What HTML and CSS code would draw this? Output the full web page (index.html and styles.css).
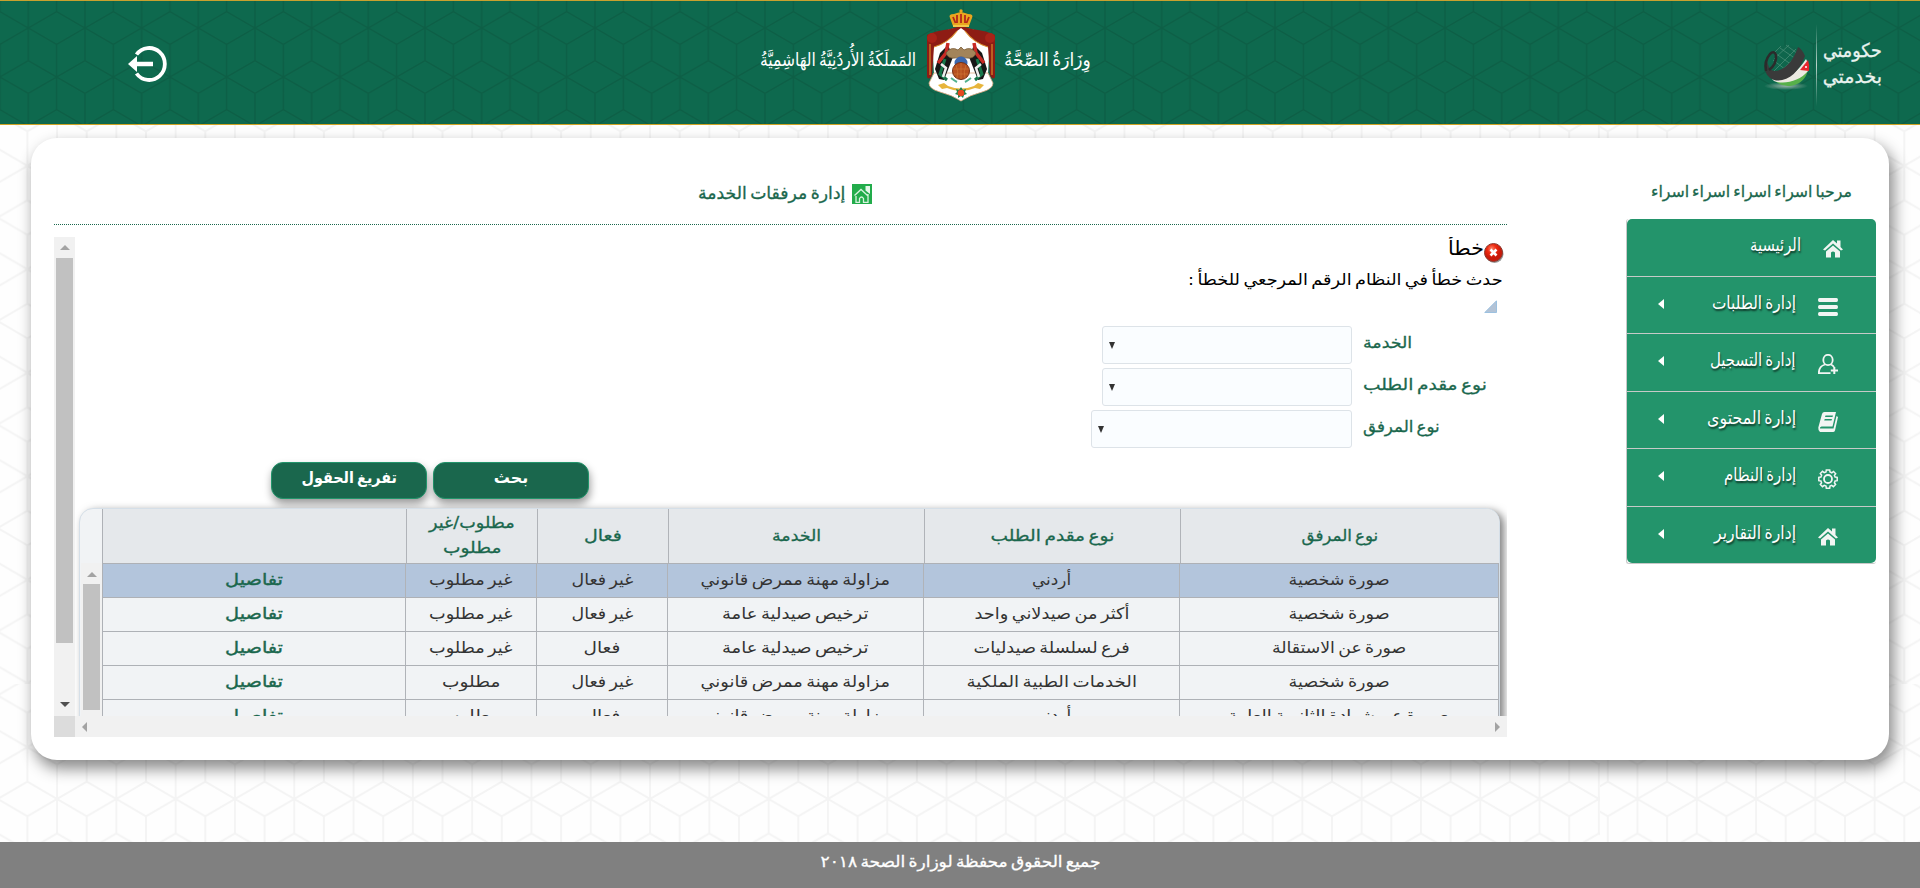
FILE: index.html
```html
<!DOCTYPE html>
<html lang="ar" dir="rtl">
<head>
<meta charset="utf-8">
<title>إدارة مرفقات الخدمة</title>
<link rel="stylesheet" href="styles.css">
</head>
<body>
<svg class="page-pattern" width="1920" height="888" aria-hidden="true">
  <defs>
    <path id="hexPath" fill="none" stroke="#f4f4f4" stroke-width="2" d="M0 0L29.65 17.25L59.3 0M0 103.5L29.65 86.25L59.3 103.5M0 69L59.3 34.5M0 34.5L59.3 69M0 0V34.5M59.3 0V34.5M0 69V103.5M59.3 69V103.5M29.65 17.25V86.25"/>
    <pattern id="hexA" width="59.3" height="103.5" patternUnits="userSpaceOnUse" patternTransform="translate(27.4 165.8)"><use href="#hexPath"/></pattern>
    <pattern id="hexB" width="59.3" height="103.5" patternUnits="userSpaceOnUse" patternTransform="translate(27.4 747.2)"><use href="#hexPath"/></pattern>
    <pattern id="hexC" width="59.3" height="103.5" patternUnits="userSpaceOnUse" patternTransform="translate(1904.3 165.8)"><use href="#hexPath"/></pattern>
    <pattern id="hexD" width="59.3" height="103.5" patternUnits="userSpaceOnUse" patternTransform="translate(1904.3 747.2)"><use href="#hexPath"/></pattern>
  </defs>
  <rect width="1600" height="684" fill="url(#hexA)"/>
  <rect y="684" width="1600" height="204" fill="url(#hexB)"/>
  <rect x="1600" width="320" height="684" fill="url(#hexC)"/>
  <rect x="1600" y="684" width="320" height="204" fill="url(#hexD)"/>
</svg>

<header class="header">
  <svg class="header-pattern" width="1920" height="123" aria-hidden="true">
    <defs>
      <pattern id="hexH" width="56.67" height="98" patternUnits="userSpaceOnUse" patternTransform="translate(28.3 27)">
        <path fill="none" stroke="#0d5f46" stroke-width="1.5" d="M0 0L28.33 16.33L56.67 0M0 98L28.33 81.67L56.67 98M0 65.33L56.67 32.67M0 32.67L56.67 65.33M0 0V32.67M56.67 0V32.67M0 65.33V98M56.67 65.33V98M28.33 16.33V81.67"/>
      </pattern>
    </defs>
    <rect width="1920" height="123" fill="url(#hexH)"/>
  </svg>
  <div class="egov">
    <div class="egov-text">
      <span class="fit" data-w="59">حكومتي</span>
      <span class="fit" data-w="59">بخدمتي</span>
    </div>
    <i class="egov-rule"></i>
    <svg class="egov-ball" width="48" height="50" viewBox="0 0 48 50">
      <defs><radialGradient id="sh"><stop offset="0" stop-color="#b9c4bd" stop-opacity=".8"/><stop offset="1" stop-color="#b9c4bd" stop-opacity="0"/></radialGradient></defs>
      <ellipse cx="24" cy="43" rx="22" ry="4" fill="url(#sh)"/>
      <path d="M10 9Q22 -2 35 5L30 18L12 29L8 26Z" fill="#0f664c"/>
      <path d="M13 10L30 22M18 5L34 16M24 2L36 11M11 17L24 27M34 6L12 28M27 2L12 16M35 13L20 27M19 3L12 10" stroke="#4f917a" stroke-width=".7"/>
      <path d="M12 37Q30 40 46 24C46 36 36 43 26 43Q18 43 12 37Z" fill="#57b04a"/>
      <path d="M10 36Q30 38 44 16Q47 20 46 28C38 38 22 42 12 38Z" fill="#eceae2"/>
      <path d="M46 17L38 27L47 28Q48 22 46 17Z" fill="#e5262d"/><circle cx="44" cy="24" r="1" fill="#fff"/>
      <path d="M36 4Q40 6 43 13C37 30 24 40 12 37Q3 34 3 24Q3 20 5 17Q6 27 12 28C24 28 32 16 36 4Z" fill="#3a3a3a"/>
      <path d="M7 27Q15 21 14 12Q12 7 8 11Q2 18 4 28" fill="none" stroke="#2b2b2b" stroke-width="2.6"/>
    </svg>
  </div>
  <div class="brand">
    <span class="brand-name fit" data-w="87">وِزَارَةُ الصِّحَّةُ</span>
    <svg class="emblem" width="70" height="94" viewBox="0 0 70 94">
      <path d="M6 28Q35 10 64 28L62 66Q66 74 54 82Q42 86 35 92Q28 86 16 82Q4 74 8 66Z" fill="#fff"/>
      <path d="M3 74Q3 80 14 83Q26 86 35 92Q44 86 56 83Q67 80 67 74L62 64H8Z" fill="#fff" stroke="#e0a880" stroke-width=".8"/>
      <path d="M24 20Q8 22 1 26V68Q3 72 6 66L8 38Q22 34 31 22L35 19L39 22Q48 34 62 38L64 66Q67 72 69 68V26Q62 22 46 20L35 17Z" fill="#8e1c14"/>
      <circle cx="6" cy="29" r="5" fill="#a82318"/><circle cx="64" cy="29" r="5" fill="#a82318"/>
      <path d="M8 38Q22 34 31 22M62 38Q48 34 39 22M4 35V66M66 35V66" fill="none" stroke="#d98c2b" stroke-width="1.2"/>
      <path d="M24 9Q22 5 28 5L31 4L35 3L39 4L42 5Q48 5 46 9L43 17H27Z" fill="#e9a51f"/>
      <path d="M27 8L29.500 14M31 6V14M35 5V14M39 6V14M43 8L40.500 14" stroke="#b3261a" stroke-width="1.800"/>
      <path d="M27 17H43" stroke="#f3c64a" stroke-width="2"/><circle cx="35" cy="2" r="1.700" fill="#e9a51f"/>
      <path d="M22 36L14 44L9 60L13 70L18 71L27 48Z" fill="#171717"/><path d="M48 36L56 44L61 60L57 70L52 71L43 48Z" fill="#171717"/>
      <path d="M22 34L20 44L12 54M48 34L50 44L58 54" stroke="#c82a25" stroke-width="3.500" fill="none"/>
      <path d="M19 50L14 65L21 71M51 50L56 65L49 71" stroke="#16774b" stroke-width="3" fill="none"/>
      <path d="M15 55L20 59L17 68M55 55L50 59L53 68" stroke="#eee" stroke-width="2.500" fill="none"/>
      <path d="M20 44Q25 37 32 41L35 38L38 41Q45 37 50 44Q48 50 41 49Q35 47 29 49Q22 50 20 44Z" fill="#a3845a" stroke="#7a5c36" stroke-width=".8"/>
      <circle cx="35" cy="54" r="6.500" fill="#3c67ad"/>
      <circle cx="35" cy="62" r="8.500" fill="#b6501f" stroke="#743015"/>
      <path d="M27 60H43M28 65H42M35 54V70M30 56Q33 63 31 69M40 56Q37 63 39 69" stroke="#cf7434" stroke-width=".7" fill="none"/>
      <path d="M25 69Q29 72 31 73M45 69Q41 72 39 73" stroke="#50b08e" stroke-width="2"/>
      <path d="M12 76L18 74L22 77Q35 82 48 77L52 74L58 76L54 80L49 79Q35 85 21 79L16 80Z" fill="#e7b53c"/>
      <path d="M35 78L37 81L40 80L39 83L41 85L38 86L37 89L35 87L32 89L32 86L29 85L31 83L30 80L33 81Z" fill="#17824f"/><circle cx="35" cy="84" r="3.300" fill="#e5471f"/>
    </svg>
    <span class="brand-name far fit" data-w="156">المَملَكَةُ الأُردُنِيَّةُ الهَاشِمِيَّةُ</span>
  </div>
  <a class="logout" href="#">
    <svg width="40" height="40" viewBox="0 0 40 40" fill="none" stroke="#fff"><path d="M8.5 10.5A15.7 16 0 1 1 8.5 29.500" stroke-width="3.800"/><path d="M8 20H25" stroke-width="4.500"/><path d="M0 20L9 12V28Z" fill="#fff" stroke="none"/></svg>
  </a>
</header>

<main class="card">
  <aside class="sidebar">
    <div class="greeting"><span class="fit" data-w="201">مرحبا اسراء اسراء اسراء اسراء</span></div>
    <nav class="menu">
      <a class="item home"><svg class="ico" viewBox="0 0 20 20"><path d="M10 1L0 10.500L2 11.500L10 4.500L18 11.500L20 10.500L17.500 8V1.500H14V4.500ZM3 12.500L10 6.500L17 12.500V18.500H12V13.500Q10 11.500 8 13.500V18.500H3Z"/></svg><span class="fit" data-w="51">الرئيسية</span></a>
      <a class="item"><svg class="ico" viewBox="0 0 20 20"><path d="M1.500 1H18.500Q20 1 20 3T18.500 5H1.500Q0 5 0 3T1.500 1ZM1.500 8H18.500Q20 8 20 10T18.500 12H1.500Q0 12 0 10T1.500 8ZM1.500 15H18.500Q20 15 20 17T18.500 19H1.500Q0 19 0 17T1.500 15Z"/></svg><span class="fit" data-w="84">إدارة الطلبات</span><i></i></a>
      <a class="item"><svg class="ico line" viewBox="0 0 20 20"><ellipse cx="10" cy="6" rx="4.700" ry="5.200"/><path d="M7 10.500C2 12 .8 15 .8 19.200H12.500M13 10.500Q15 11.500 16 13"/><path d="M16.300 13V20M12.800 16.500H20" stroke-width="2"/></svg><span class="fit" data-w="86">إدارة التسجيل</span><i></i></a>
      <a class="item"><svg class="ico" viewBox="0 0 20 20"><path fill-rule="evenodd" d="M6.500 0H18L14.500 14.500H3.500Q1.500 15 2 16.500H15.500L18.500 4L20 5L17 18.500Q16.500 20 15 20H2Q0 19 .3 15.500L4 2Q4.500 0 6.500 0ZM7.500 3.500L7 5H14.500L15 3.500ZM6.700 7L6.200 8.500H13.500L14 7Z"/></svg><span class="fit" data-w="89">إدارة المحتوى</span><i></i></a>
      <a class="item"><svg class="ico line" viewBox="0 0 20 20"><path stroke-width="1.500" d="M8 3L8.300 1H11.700L12 3L13.800 3.800L15.500 2.500L17.700 4.800L16.400 6.300L17.100 8L19.200 8.300V11.700L17.100 12L16.400 13.800L17.600 15.500L15.400 17.700L13.700 16.400L12 17.100L11.700 19.200H8.300L8 17.100L6.200 16.400L4.500 17.700L2.300 15.500L3.600 13.800L2.900 12L.8 11.700V8.300L2.900 8L3.600 6.200L2.300 4.500L4.500 2.300L6.200 3.700Z"/><circle cx="10" cy="10" r="4"/></svg><span class="fit" data-w="72">إدارة النظام</span><i></i></a>
      <a class="item"><svg class="ico" viewBox="0 0 20 20"><path d="M10 1L0 10.500L2 11.500L10 4.500L18 11.500L20 10.500L17.500 8V1.500H14V4.500ZM3 12.500L10 6.500L17 12.500V18.500H12V13.500Q10 11.500 8 13.500V18.500H3Z"/></svg><span class="fit" data-w="82">إدارة التقارير</span><i></i></a>
    </nav>
  </aside>

  <section class="content">
    <h1 class="title">
      <svg width="20" height="20" viewBox="0 0 20 20"><path d="M0 0H20V20H0Z" fill="#22ac4b"/><path d="M2.500 11.500L9 5.500L15.500 11.500M4 12V18.300H7.500V14.500Q9.500 11.500 11.500 14.500V18.300H16V10" fill="none" stroke="#d8f3df" stroke-width="1.300"/><path d="M13.500 2H18V10L13.500 6.500Z" fill="#e4f7e9"/></svg>
      <span class="fit" data-w="147">إدارة مرفقات الخدمة</span>
    </h1>
    <div class="scroller">
      <div class="viewport">
        <div class="error-head"><svg width="20" height="20" viewBox="0 0 20 20"><defs><radialGradient id="er" cx=".4" cy=".3"><stop offset="0" stop-color="#ff8a70"/><stop offset=".5" stop-color="#ee2a10"/><stop offset="1" stop-color="#c81a0a"/></radialGradient></defs><circle cx="10.500" cy="11" r="9" fill="#999"/><circle cx="9.500" cy="9.500" r="9" fill="url(#er)" stroke="#8d3a30"/><path d="M6.500 6.500L12.500 12.500M12.500 6.500L6.500 12.500" stroke="#fff" stroke-width="2.600"/></svg><span class="fit" data-w="36">خطأ</span></div>
        <div class="error-text"><span class="fit" data-w="315">حدث خطأ في النظام الرقم المرجعي للخطأ :</span></div>
        <svg class="corner" width="13" height="13" viewBox="0 0 13 13"><path d="M12.500 .8V12.500H.8Z" fill="#b3c3d6" stroke="#9cc1e0"/></svg>
        <form class="filters">
          <div class="field"><label><span class="fit" data-w="49">الخدمة</span></label><div class="select"><i></i></div></div>
          <div class="field"><label><span class="fit" data-w="124">نوع مقدم الطلب</span></label><div class="select"><i></i></div></div>
          <div class="field"><label><span class="fit" data-w="77">نوع المرفق</span></label><div class="select wide"><i></i></div></div>
        </form>
        <div class="actions">
          <button type="button"><span class="fit" data-w="34">بحث</span></button>
          <button type="button"><span class="fit" data-w="95">تفريغ الحقول</span></button>
        </div>
        <div class="panel">
          <div class="tables">
            <div class="row head">
              <div><span class="fit" data-w="77">نوع المرفق</span></div><div><span class="fit" data-w="124">نوع مقدم الطلب</span></div><div><span class="fit" data-w="49">الخدمة</span></div><div><span class="fit" data-w="38">فعال</span></div><div><span class="fit" data-w="86">مطلوب/غير</span><span class="fit" data-w="58">مطلوب</span></div><div></div>
            </div>
            <div class="row selected"><div><span class="fit" data-w="101">صورة شخصية</span></div><div><span class="fit" data-w="39">أردني</span></div><div><span class="fit" data-w="190">مزاولة مهنة ممرض قانوني</span></div><div><span class="fit" data-w="62">غير فعال</span></div><div><span class="fit" data-w="83">غير مطلوب</span></div><div><a class="fit" data-w="58">تفاصيل</a></div></div>
            <div class="row"><div><span class="fit" data-w="101">صورة شخصية</span></div><div><span class="fit" data-w="155">أكثر من صيدلاني واحد</span></div><div><span class="fit" data-w="146">ترخيص صيدلية عامة</span></div><div><span class="fit" data-w="62">غير فعال</span></div><div><span class="fit" data-w="83">غير مطلوب</span></div><div><a class="fit" data-w="58">تفاصيل</a></div></div>
            <div class="row"><div><span class="fit" data-w="134">صورة عن الاستقالة</span></div><div><span class="fit" data-w="156">فرع لسلسلة صيدليات</span></div><div><span class="fit" data-w="146">ترخيص صيدلية عامة</span></div><div><span class="fit" data-w="37">فعال</span></div><div><span class="fit" data-w="83">غير مطلوب</span></div><div><a class="fit" data-w="58">تفاصيل</a></div></div>
            <div class="row"><div><span class="fit" data-w="101">صورة شخصية</span></div><div><span class="fit" data-w="171">الخدمات الطبية الملكية</span></div><div><span class="fit" data-w="190">مزاولة مهنة ممرض قانوني</span></div><div><span class="fit" data-w="62">غير فعال</span></div><div><span class="fit" data-w="58">مطلوب</span></div><div><a class="fit" data-w="58">تفاصيل</a></div></div>
            <div class="row"><div><span class="fit" data-w="221">صورة عن شهادة الثانوية العامة</span></div><div><span class="fit" data-w="39">أردني</span></div><div><span class="fit" data-w="190">مزاولة مهنة ممرض قانوني</span></div><div><span class="fit" data-w="37">فعال</span></div><div><span class="fit" data-w="58">مطلوب</span></div><div><a class="fit" data-w="58">تفاصيل</a></div></div>
          </div>
          <div class="gutter"><div class="inner-bar"><i class="up"></i><b></b></div></div>
        </div>
      </div>
      <div class="vbar"><i class="up"></i><b></b><i class="down"></i></div>
      <div class="hbar"><i class="right"></i><i class="left"></i></div>
      <div class="bar-corner"></div>
    </div>
  </section>
</main>

<footer class="footer"><span class="fit" data-w="280">جميع الحقوق محفظة لوزارة الصحة ٢٠١٨</span></footer>
<script src="fit.js"></script>
</body>
</html>
```
FILE: styles.css
```css
* { box-sizing: border-box; }
body {
  margin: 0; height: 888px; overflow: hidden; position: relative;
  display: flex; flex-direction: column; background: #fefefe;
  font-family: "DejaVu Sans", sans-serif; font-size: 16px; line-height: 20px; color: #333;
  word-spacing: -2px;
}
.page-pattern { position: absolute; top: 0; left: 0; }
.fit { display: inline-block; white-space: nowrap; flex: none; }

.header {
  position: relative; height: 125px; flex: none; background: #0e694e;
  border-top: 1px solid #c9a12e; border-bottom: 1px solid #d0a324;
  display: flex; justify-content: space-between; padding: 0 37px 0 128px;
}
.header-pattern { position: absolute; top: 0; left: 0; }
.egov, .brand, .logout { position: relative; display: flex; direction: rtl; }
.egov { width: 330px; }
.egov-text { width: 60px; padding: 36px 1px 0 0; display: flex; flex-direction: column; align-items: flex-start; color: #e9f3ef; font-size: 19px; line-height: 26px; -webkit-text-stroke: .3px #e9f3ef; }
.egov-text .fit { transform-origin: right; }
.egov-rule { width: 1px; height: 82px; margin: 23px 6px 0 6px; background: linear-gradient(transparent, #b9d2c9, transparent); }
.egov-ball { margin-top: 42px; }
.brand { position: absolute; left: 760px; top: 0; width: 331px; justify-content: space-between; }
.brand-name { color: #fff; font-size: 18px; line-height: 24px; margin-top: 47px; transform-origin: right; height: 24px; }
.brand-name.far { transform-origin: left; }
.emblem { margin-top: 8px; position: absolute; left: 166px; }
.logout { padding-top: 43px; }

.card {
  position: relative; flex: none; width: 1858px; height: 622px; margin: 13px 31px 0;
  background: #fff; border-radius: 26px; box-shadow: 4px 8px 15px 1px rgba(0,0,0,.45);
  display: flex; gap: 119px; padding: 0 13px 0 23px;
}
.sidebar { width: 250px; padding-top: 44px; }
.greeting { height: 37px; padding-right: 24px; color: #1a674d; -webkit-text-stroke: .3px #1a674d; }
.greeting .fit, .item .fit, .error-head .fit, .error-text .fit { transform-origin: right; }
.menu { border: 1px solid #c8c8c8; border-width: 0 0 1px 1px; height: 345px; display: flex; flex-direction: column; border-radius: 3px; }
.item {
  position: relative; flex: 1; display: flex; align-items: flex-start; background: #23946b;
  border-bottom: 1px solid #c6cac8; padding: 16px 38px 0 38px; color: #fff; font-size: 18px;
  text-shadow: 1px 2px 2px rgba(0,0,0,.6);
}
.item:first-child { border-radius: 5px 5px 0 0; }
.item:last-child { border-bottom: 0; border-radius: 0 0 5px 5px; }
.item.home { padding-right: 33px; }
.ico { width: 20px; height: 20px; margin: 4px 0 0 22px; fill: #f2f5f3; flex: none; }
.ico.line { fill: none; stroke: #f2f5f3; stroke-width: 1.8; }
.item i { position: absolute; left: 31px; top: 22px; border: solid transparent; border-width: 5px 6px 5px 0; border-right-color: #fff; }

.content { width: 1453px; padding-top: 45px; }
.title {
  margin: 0; height: 42px; border-bottom: 1px dotted #1a674d; display: flex; gap: 7px;
  padding-right: 635px; font-weight: 400; font-size: 17px; color: #1a674d; -webkit-text-stroke: .3px #1a674d;
}
.title svg { margin-top: 1px; }
.title .fit { transform-origin: right; }
.scroller { margin-top: 12px; display: grid; grid-template-columns: 1432px 21px; grid-template-rows: 479px 21px; direction: rtl; }
.viewport { overflow: hidden; width: 1432px; height: 479px; }
.vbar { background: #f1f1f1; display: flex; flex-direction: column; align-items: center; padding: 7px 2px 9px; }
.vbar b { width: 17px; height: 385px; background: #c1c1c1; margin-top: 8px; margin-bottom: auto; }
.up, .down, .left, .right { width: 0; height: 0; border: 5px solid transparent; }
.up { border-top: 0; border-bottom-color: #a3a3a3; }
.vbar .up { margin-top: 1px; }
.down { border-bottom: 0; border-top-color: #505050; }
.left { border-left: 0; border-right-color: #a3a3a3; }
.right { border-right: 0; border-left-color: #a3a3a3; }
.hbar { background: #f1f1f1; display: flex; justify-content: space-between; align-items: center; padding: 0 7px; }
.bar-corner { background: #dcdcdc; }

.error-head { display: flex; height: 31px; padding: 5px 3px 0 0; color: #000; font-size: 20px; }
.error-head svg { margin-top: 1px; }
.error-head .fit { margin-top: -4px; }
.error-text { height: 32px; padding: 2px 4px 0 0; color: #000; }
.corner { display: block; margin: 0 10px 0 0; }
.filters { padding: 13px 16px 0 0; display: flex; flex-direction: column; gap: 4px; }
.field { display: flex; height: 38px; }
.field label { width: 139px; text-align: left; direction: ltr; padding: 7px 0 0 11px; color: #1a674d; -webkit-text-stroke: .3px #1a674d; }
.field .fit { transform-origin: left; }
.select { position: relative; width: 250px; height: 38px; border: 1px solid #dde3e8; border-radius: 3px; background: #fafdff; }
.select.wide { width: 261px; }
.select i { position: absolute; left: 6px; top: 15px; border: solid transparent; border-width: 7px 3.5px 0; border-top-color: #333; }
.actions { display: flex; gap: 6px; padding: 14px 918px 0 0; height: 60px; }
.actions button {
  width: 156px; height: 37px; padding: 0 0 6px; border: 1px solid #22946b; border-radius: 12px;
  background: #1a674d; color: #fff; font: bold 16px/20px "DejaVu Sans", sans-serif; word-spacing: -2px;
  display: flex; justify-content: center; align-items: center; box-shadow: 1px 5px 8px rgba(0,0,0,.4);
}
.panel {
  position: relative; display: flex; width: 1421px; height: 260px; margin-right: 7px;
  border: 1px solid #d5dfe8; border-radius: 14px; background: #f1f3f5;
  box-shadow: 4px 3px 9px rgba(0,0,0,.5);
}
.tables { width: 1397px; }
.row { display: grid; grid-template-columns: 319px 256px 256px 131px 131px 302px; height: 34px; border: 1px solid #aeb1b6; border-top: 0; }
.row > div { display: flex; flex-direction: column; align-items: center; justify-content: center; border-left: 1px solid #b0b3b8; padding-bottom: 2px; }
.row > div:last-child { border-left: 0; }
.row.head { height: 55px; background: #e5e8eb; color: #1a674d; line-height: 25px; border-right: 0; border-radius: 0 13px 0 0; -webkit-text-stroke: .3px #1a674d; }
.row.selected { background: #b3c5dc; }
.row a { color: #1a674d; -webkit-text-stroke: .4px #1a674d; }
.gutter { width: 21px; padding-top: 54px; }
.inner-bar { height: 170px; background: #f1f1f1; display: flex; flex-direction: column; align-items: center; padding-top: 9px; }
.inner-bar b { width: 17px; height: 126px; margin-top: 7px; background: #c1c1c1; }

.footer { position: absolute; left: 0; right: 0; bottom: 0; height: 46px; background: #808080; color: #fff; display: flex; justify-content: center; padding-top: 10px; -webkit-text-stroke: .3px #fff; }
```
FILE: fit.js
```js
// Scale each label horizontally to its design width.
document.querySelectorAll('.fit').forEach(function (el) {
  el.style.transform = 'scaleX(' + (el.dataset.w / el.offsetWidth) + ')';
});
```
